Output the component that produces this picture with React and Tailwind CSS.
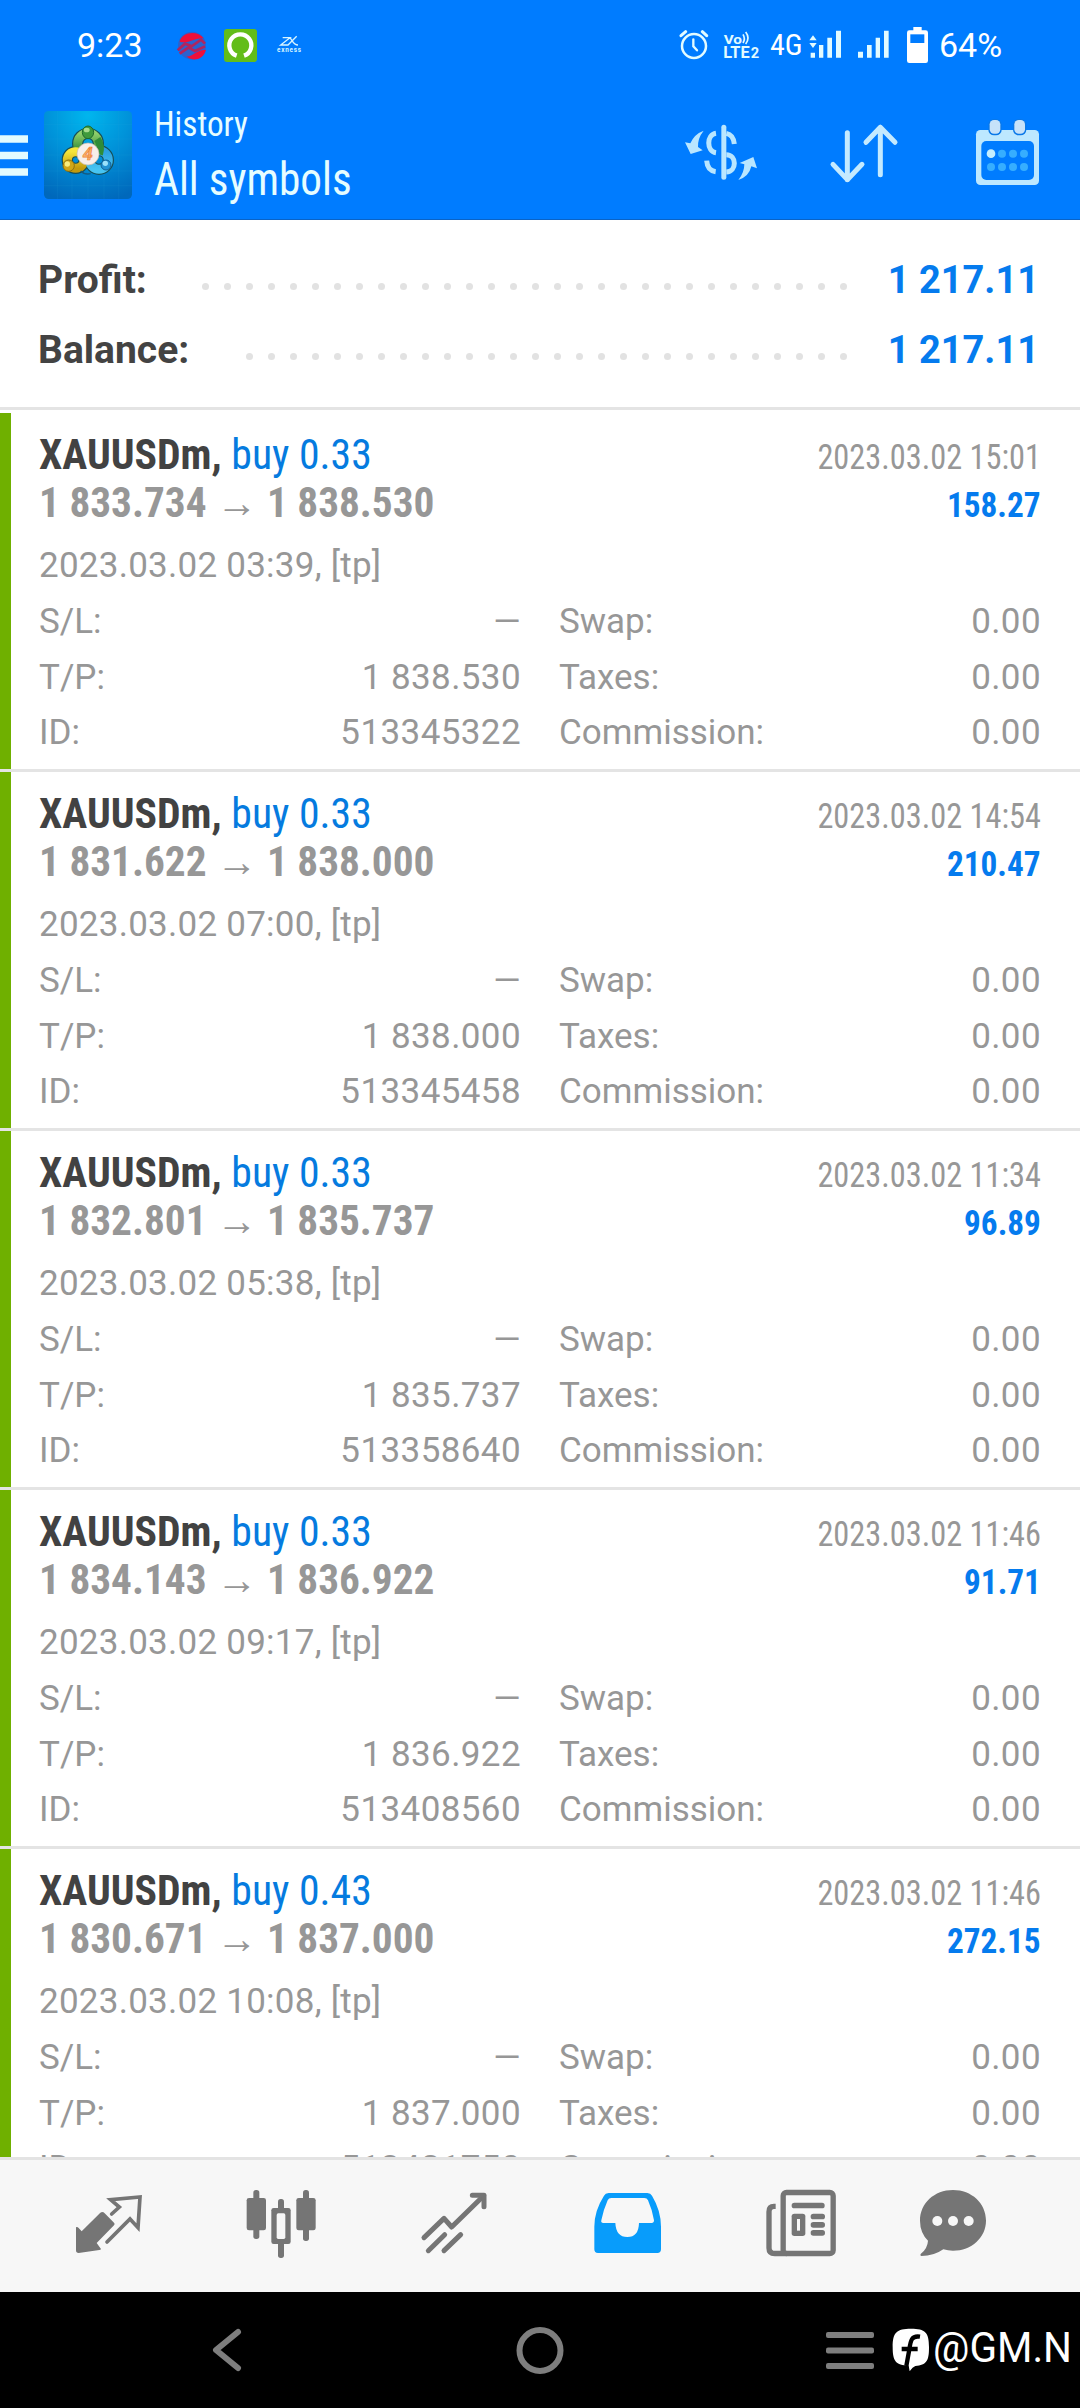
const deals = [
  { volume: '0.33', open: '1 833.734', close: '1 838.530', closeTime: '2023.03.02 15:01', profit: '158.27', openTime: '2023.03.02 03:39', tp: '1 838.530', id: '513345322' },
  { volume: '0.33', open: '1 831.622', close: '1 838.000', closeTime: '2023.03.02 14:54', profit: '210.47', openTime: '2023.03.02 07:00', tp: '1 838.000', id: '513345458' },
  { volume: '0.33', open: '1 832.801', close: '1 835.737', closeTime: '2023.03.02 11:34', profit: '96.89', openTime: '2023.03.02 05:38', tp: '1 835.737', id: '513358640' },
  { volume: '0.33', open: '1 834.143', close: '1 836.922', closeTime: '2023.03.02 11:46', profit: '91.71', openTime: '2023.03.02 09:17', tp: '1 836.922', id: '513408560' },
  { volume: '0.43', open: '1 830.671', close: '1 837.000', closeTime: '2023.03.02 11:46', profit: '272.15', openTime: '2023.03.02 10:08', tp: '1 837.000', id: '513421750' },
];

function StatusBar() {
  return (
    <div className="flex h-[90px] items-center pl-[77px] text-white">
      <div className="w-[98px] text-[34px] leading-none">9:23</div>

      {/* Notification icons */}
      <svg className="mr-4 h-[33px] w-[33px] shrink-0" viewBox="0 0 99 99">
        <circle cx="51" cy="50" r="42" fill="#2b62cf" />
        <path d="M14 38C20 10 66 2 86 28C62 24 40 46 14 38Z" fill="#ee0f3a" />
        <path d="M34 82C52 84 66 62 93 62C86 94 50 98 34 82Z" fill="#ee0f3a" />
        <path d="M8 64L30 44L50 52L78 32L90 44M14 74L40 56L60 66L90 52" stroke="#b0245f" strokeWidth="8" fill="none" />
      </svg>
      <svg className="mr-[19px] h-[33px] w-[33px] shrink-0" viewBox="0 0 99 99">
        <rect width="99" height="99" rx="9" fill="#62bd19" />
        <path d="M38 80A33 33 0 1 1 60 80" stroke="#fff" strokeWidth="13" fill="none" />
      </svg>
      <svg className="h-[20px] w-[26px] shrink-0" viewBox="0 0 78 60">
        <path d="M20 8H42L14 30H36L62 4M42 8C48 14 52 30 66 30" stroke="#d8f4ff" strokeWidth="4" fill="none" />
        <text x="3" y="52" fontSize="19" fontWeight="700" fill="#d8f4ff" textLength="72">exness</text>
      </svg>

      {/* System icons */}
      <svg className="ml-[377px] h-[32px] w-[30px] shrink-0" viewBox="59 83 90 96" fill="none" stroke="#e2fbff" strokeLinecap="round">
        <circle cx="104" cy="134" r="36" strokeWidth="7.5" />
        <path d="M102 114V135L113 147" strokeWidth="7" />
        <path d="M65 103L79 91M129 91L142 103" strokeWidth="9" />
      </svg>
      <svg className="ml-[14px] h-[32px] w-[38px] shrink-0" viewBox="192 83 114 96" fill="#e2fbff">
        <text x="194" y="127" fontSize="39" fontWeight="700" textLength="55" lengthAdjust="spacingAndGlyphs">Vo</text>
        <path d="M252 99Q260 112 252 125M260 92Q274 110 260 128" stroke="#e2fbff" strokeWidth="5" fill="none" />
        <text x="193" y="171" fontSize="47" fontWeight="700" textLength="79" lengthAdjust="spacingAndGlyphs">LTE</text>
        <text x="275" y="171" fontSize="44" fontWeight="700">2</text>
      </svg>
      <div className="ml-[9px] w-[39px] font-['Roboto_Condensed'] text-[30px] leading-none">4G</div>
      <svg className="h-[32px] w-[34px] shrink-0" viewBox="450 85 102 96" fill="#e2fbff">
        <path d="M462 104L473 119H451ZM462 142L473 127H451Z" />
        <path d="M455 156H468V171H455ZM480 133H493V171H480ZM505 111H519V171H505ZM531 90H546V171H531Z" />
      </svg>
      <svg className="ml-[15px] h-[32px] w-[32px] shrink-0" viewBox="600 85 96 96" fill="#e2fbff">
        <path d="M600 153H615V171H600ZM627 133H641V171H627ZM653 111H666V171H653ZM678 90H692V171H678Z" />
      </svg>
      <svg className="ml-[17px] h-[36px] w-[21px] shrink-0" viewBox="747 78 63 108">
        <path d="M766 78H791V88H803Q810 88 810 95V179Q810 186 803 186H754Q747 186 747 179V95Q747 88 754 88H766Z" fill="#fff" />
        <rect x="757" y="100" width="42" height="26" fill="#007cff" />
      </svg>
      <div className="ml-[11px] text-[34px] leading-none">64%</div>
    </div>
  );
}

function AppLogo() {
  return (
    <svg className="ml-4 h-[88px] w-[88px] shrink-0" viewBox="0 0 264 264">
      <defs>
        <radialGradient id="tile" cx="50%" cy="5%" r="100%">
          <stop offset="0" stopColor="#00b6ee" />
          <stop offset="0.5" stopColor="#0090d8" />
          <stop offset="1" stopColor="#0068bb" />
        </radialGradient>
        <linearGradient id="green" x1="0" y1="0" x2="0" y2="1">
          <stop offset="0" stopColor="#8fcf6a" />
          <stop offset="1" stopColor="#1f7d2c" />
        </linearGradient>
        <linearGradient id="yellow" x1="0" y1="0" x2="0" y2="1">
          <stop offset="0" stopColor="#f6e53a" />
          <stop offset="1" stopColor="#c39a0d" />
        </linearGradient>
        <linearGradient id="blue" x1="0" y1="0" x2="0" y2="1">
          <stop offset="0" stopColor="#2b9fdf" />
          <stop offset="1" stopColor="#46c4f2" />
        </linearGradient>
      </defs>
      <rect width="264" height="264" rx="14" fill="url(#tile)" />
      <path d="M40 0V264M84 0V264M132 0V264M180 0V264M224 0V264M0 40H264M0 84H264M0 132H264M0 180H264M0 224H264" stroke="#2aa8e0" strokeOpacity="0.18" strokeWidth="2" />

      {/* Dark outlines first, coloured rings on top */}
      <g fill="none" stroke="#174f57" strokeWidth="34">
        <circle cx="132" cy="98" r="31" />
        <circle cx="95" cy="147" r="25" />
        <circle cx="165" cy="147" r="28" />
      </g>
      <circle cx="132" cy="98" r="31" fill="none" stroke="url(#green)" strokeWidth="27" />
      <circle cx="95" cy="147" r="25" fill="none" stroke="url(#yellow)" strokeWidth="27" />
      <circle cx="165" cy="147" r="28" fill="none" stroke="url(#blue)" strokeWidth="27" />
      <path d="M160 84Q174 104 166 130" stroke="#2f8c38" strokeWidth="22" fill="none" />
      <path d="M110 180Q122 192 140 188" stroke="#155a80" strokeWidth="4" fill="none" />
      <ellipse cx="132" cy="64" rx="17" ry="19" fill="#3f9a3c" stroke="#1f6a2c" strokeWidth="3" />
      <ellipse cx="128" cy="57" rx="9" ry="7" fill="#a6dc8d" />
      <circle cx="74" cy="164" r="17" fill="#d0a617" stroke="#8c7010" strokeWidth="3" />
      <circle cx="70" cy="159" r="8" fill="#f8ec7c" />
      <circle cx="186" cy="162" r="15" fill="#2392d2" stroke="#125f95" strokeWidth="3" />
      <circle cx="184" cy="157" r="8" fill="#9be0fa" />
      <circle cx="132" cy="129" r="33" fill="#f7eee9" stroke="#c9b9a9" strokeWidth="2" />
      <text x="131" y="148" fontSize="54" fontStyle="italic" fontWeight="700" fill="#fbb46a" stroke="#ee8038" strokeWidth="2" textAnchor="middle">4</text>
    </svg>
  );
}

function AppBar() {
  return (
    <div className="flex h-[130px] border-b border-[#0a63c6] text-[#e6fdff]">
      <svg className="mt-[45px] h-[41px] w-[28px] shrink-0" viewBox="0 0 28 41">
        <path d="M0 4H28M0 20.500H28M0 37H28" stroke="#e2fbff" strokeWidth="7.500" />
      </svg>
      <div className="pt-[21px]">
        <AppLogo />
      </div>
      <div className="ml-[22px] w-[530px] pt-[15px] font-['Roboto_Condensed']">
        <div className="origin-left scale-x-[0.95] text-[35px] leading-[40px]">History</div>
        <div className="mt-[6px] origin-left scale-x-[0.92] text-[47px] leading-[56px]">All symbols</div>
      </div>

      {/* Actions */}
      <svg className="mt-[32px] h-[62px] w-[74px] shrink-0" viewBox="75 366 222 186" fill="#b9e6ff">
        <path d="M134 392Q106 402 94 430L78 427L95 462L131 451L117 441Q116 414 134 392Z" />
        <path d="M238 540Q256 518 256 493L242 489L283 471L294 505L277 499Q270 530 238 540Z" />
        <path d="M194.500 382V532" stroke="#b9e6ff" strokeWidth="15" strokeLinecap="round" />
        <g fill="none" stroke="#b9e6ff" strokeWidth="15">
          <path d="M171 400C142 404 142 454 171 458" />
          <path d="M143 482Q145 512 170 515" />
          <path d="M202 400Q223 404 226 432" />
          <path d="M202 464C234 464 234 515 202 516" />
        </g>
      </svg>
      <svg className="ml-[71px] mt-[32px] h-[62px] w-[70px] shrink-0" viewBox="510 366 210 186" fill="none" stroke="#c4eaff" strokeWidth="15" strokeLinecap="round" strokeLinejoin="round">
        <path d="M565 398V539M522 493L565 539L609 493" />
        <path d="M664 524V382M621 427L664 382L708 427" />
      </svg>
      <svg className="ml-[76px] mt-[29px] h-[67px] w-[65px] shrink-0" viewBox="948 357 195 201">
        <rect x="951" y="390" width="189" height="165" rx="13" fill="#bde8ff" />
        <rect x="967" y="423" width="158" height="117" rx="15" fill="#007cff" />
        <rect x="988" y="357" width="40" height="49" rx="17" fill="#0a78e8" />
        <rect x="1062" y="357" width="40" height="49" rx="17" fill="#0a78e8" />
        <rect x="992" y="360" width="32" height="41" rx="13" fill="#c6e2fa" />
        <rect x="1066" y="360" width="32" height="41" rx="13" fill="#c6e2fa" />
        <circle cx="996" cy="461" r="13" fill="#c4eeff" />
        <g fill="#36aeff">
          <circle cx="1029" cy="461" r="12" />
          <circle cx="1062" cy="461" r="12" />
          <circle cx="1095" cy="461" r="12" />
          <circle cx="996" cy="501" r="12" />
          <circle cx="1029" cy="501" r="12" />
          <circle cx="1062" cy="501" r="12" />
          <circle cx="1095" cy="501" r="12" />
        </g>
      </svg>
    </div>
  );
}

function SummaryRow({ label, value, dots }) {
  return (
    <div className="flex h-[70px] items-center justify-between font-bold leading-[70px]">
      <span className="text-[39px] text-[#434343]">{label}</span>
      <div className="flex items-center">
        <div className="mr-[40px] flex gap-[15px] pt-[13px]">
          {Array.from({ length: dots }, (_, i) => (
            <span key={i} className="h-[7px] w-[7px] rounded-full bg-[#e2e2e2]" />
          ))}
        </div>
        <span className="w-[152px] whitespace-nowrap text-right text-[38px] text-[#057bee]">{value}</span>
      </div>
    </div>
  );
}

function DealField({ label, value }) {
  return (
    <div className="flex justify-between">
      <span>{label}</span>
      <span className="tracking-[0.4px]">{value}</span>
    </div>
  );
}

function DealCard({ deal }) {
  return (
    <div className="h-[359px] shrink-0 border-b-[3px] border-[#e4e4e4]">
      <div className="h-full border-l-[11px] border-[#6fb000] pl-[28px] pr-[39px] pt-[18px] text-[#979797]">
        <div className="flex h-[48px] items-baseline justify-between font-['Roboto_Condensed'] leading-[48px]">
          <span className="origin-left scale-x-[0.993] text-[42px] font-bold text-[#424242]">
            XAUUSDm, <span className="font-normal text-[#057bdf]">buy {deal.volume}</span>
          </span>
          <span className="origin-right scale-x-[0.924] text-[35px]">{deal.closeTime}</span>
        </div>
        <div className="flex h-[48px] items-baseline justify-between font-['Roboto_Condensed'] font-bold leading-[48px]">
          <span className="origin-left scale-x-[0.983] text-[42px]">
            {deal.open} → {deal.close}
          </span>
          <span className="origin-right scale-x-[0.95] text-[35px] text-[#057bee]">{deal.profit}</span>
        </div>
        <div className="mt-[10px] text-[35px] leading-[57px] tracking-[0.25px]">{deal.openTime}, [tp]</div>
        <div className="grid grid-cols-[482px_482px] gap-x-[38px] text-[35px] leading-[55.5px]">
          <DealField label="S/L:" value="—" />
          <DealField label="Swap:" value="0.00" />
          <DealField label="T/P:" value={deal.tp} />
          <DealField label="Taxes:" value="0.00" />
          <DealField label="ID:" value={deal.id} />
          <DealField label="Commission:" value="0.00" />
        </div>
      </div>
    </div>
  );
}

function TabBar() {
  return (
    <div className="flex h-[135px] items-start border-t-[3px] border-[#e3e3e3] bg-[#f7f7f7] pl-[74px] pt-[27px]">
      {/* Quotes */}
      <svg className="h-[71px] w-[70px] shrink-0" viewBox="42 21 210 213">
        <path d="M126 96Q131 96 134 100L162 128Q166 132 162 136L110 189L123 207Q122 210 118 210L56 219Q48 219 48 211V142Q52 140 56 144L65 154L121 98Z" fill="#757575" />
        <path d="M155 102L178 81L152 59L240 51L234 143L210 117L141 186" fill="none" stroke="#757575" strokeWidth="11" strokeLinecap="round" />
      </svg>
      {/* Charts */}
      <svg className="ml-[101px] h-[71px] w-[72px] shrink-0" viewBox="555 21 216 213" fill="#757575">
        <rect x="580" y="30" width="18" height="147" rx="8" />
        <rect x="560" y="54" width="58" height="97" rx="7" />
        <rect x="729" y="30" width="18" height="153" rx="8" />
        <rect x="709" y="54" width="58" height="97" rx="7" />
        <rect x="654" y="57" width="18" height="177" rx="8" />
        <rect x="634" y="84" width="58" height="108" rx="7" />
        <rect x="650" y="100" width="26" height="77" rx="5" fill="#f7f7f7" />
      </svg>
      {/* Trade */}
      <svg className="ml-[103px] h-[71px] w-[68px] shrink-0" viewBox="1080 21 204 213" fill="none" stroke="#757575" strokeWidth="15" strokeLinecap="round" strokeLinejoin="round">
        <path d="M1092 173L1152 115L1175 141L1271 47" />
        <path d="M1237 46H1272V80" />
        <path d="M1105 212L1154 164M1152 212L1202 164" />
      </svg>
      {/* History */}
      <svg className="ml-[105px] h-[71px] w-[69px] shrink-0" viewBox="39 21 207 213">
        <path d="M86 39H202Q212 39 216 47Q243 92 243 140V208Q243 219 232 219H54Q43 219 43 208V140Q43 92 72 47Q76 39 86 39Z" fill="#089cfb" />
        <path d="M94 54H193Q201 54 204 61Q217 90 222 121Q222 129 215 129H177Q176 171 142 171Q108 171 106 129H70Q62 129 64 121Q70 90 83 61Q86 54 94 54Z" fill="#f7f7f7" />
      </svg>
      {/* News */}
      <svg className="ml-[103px] h-[71px] w-[72px] shrink-0" viewBox="555 21 216 213">
        <rect x="609.500" y="37.500" width="150" height="183" rx="10" fill="none" stroke="#757575" strokeWidth="16" />
        <path d="M587 79H582Q567 79 567 95V204Q567 220.500 584 220.500H620" fill="none" stroke="#757575" strokeWidth="16" />
        <g fill="#757575">
          <rect x="635" y="68" width="99" height="17" rx="8" />
          <rect x="635" y="101" width="41" height="67" rx="8" />
          <rect x="692" y="101" width="43" height="17" rx="8" />
          <rect x="692" y="126" width="43" height="17" rx="8" />
          <rect x="692" y="150" width="43" height="17" rx="8" />
        </g>
        <rect x="651" y="117" width="9" height="35" fill="#f7f7f7" />
      </svg>
      {/* Chat */}
      <svg className="ml-[82px] h-[71px] w-[68px] shrink-0" viewBox="1017 21 204 213">
        <path d="M1119 30C1175 30 1218 70 1218 122C1218 172 1175 212 1119 212Q1104 212 1090 208Q1062 228 1024 228Q1019 227 1022 222Q1043 205 1044 182Q1020 158 1020 122C1020 70 1063 30 1119 30Z" fill="#757575" />
        <g fill="#f7f7f7">
          <circle cx="1072" cy="123" r="15" />
          <circle cx="1119" cy="123" r="15" />
          <circle cx="1166" cy="123" r="15" />
        </g>
      </svg>
    </div>
  );
}

function SystemNav() {
  return (
    <div className="flex h-[116px] items-center bg-black pl-[211px]">
      <svg className="h-[46px] w-[32px] shrink-0" viewBox="0 0 32 46">
        <path d="M27 5L5 23L27 41" fill="none" stroke="#7e7e7e" strokeWidth="6" strokeLinecap="round" strokeLinejoin="round" />
      </svg>
      <svg className="ml-[273px] h-[48px] w-[48px] shrink-0" viewBox="0 0 48 48">
        <circle cx="24" cy="24.500" r="20.500" fill="none" stroke="#7e7e7e" strokeWidth="6" />
      </svg>
      <svg className="ml-[262px] h-[40px] w-[48px] shrink-0" viewBox="0 0 48 40" fill="#7e7e7e">
        <rect y="2" width="48" height="6" rx="2" />
        <rect y="17.500" width="48" height="6" rx="2" />
        <rect y="33" width="48" height="6" rx="2" />
      </svg>
      <svg className="ml-[18px] h-[44px] w-[38px] shrink-0" viewBox="936 448 114 132">
        <path d="M993 450C1036 450 1047 461 1047 505C1047 548 1040 558 1006 562Q998 565 989 578L986 561C947 559 938 548 938 505C938 461 950 450 993 450Z" fill="#fff" />
        <path d="M1020 474C994 470 992 486 988 512L979 562M965 511H1013" stroke="#000" strokeWidth="13" fill="none" />
      </svg>
      <div className="ml-[3px] mt-[-4px] origin-left scale-x-[0.965] whitespace-nowrap text-[42px] leading-none text-white">@GM.N</div>
    </div>
  );
}

export default function App() {
  return (
    <div className="flex h-[2408px] w-[1080px] flex-col overflow-hidden bg-white font-['Roboto',sans-serif]">
      <header className="h-[220px] shrink-0 bg-[#007cff]">
        <StatusBar />
        <AppBar />
      </header>

      <section className="h-[190px] shrink-0 border-b-[3px] border-[#e4e4e4] pl-[38px] pr-[41px] pt-[25px]">
        <SummaryRow label="Profit:" value="1 217.11" dots={30} />
        <SummaryRow label="Balance:" value="1 217.11" dots={28} />
      </section>

      <main className="flex min-h-0 flex-1 flex-col overflow-hidden pt-[3px]">
        {deals.map(deal => (
          <DealCard key={deal.id} deal={deal} />
        ))}
      </main>

      <TabBar />
      <SystemNav />
    </div>
  );
}
